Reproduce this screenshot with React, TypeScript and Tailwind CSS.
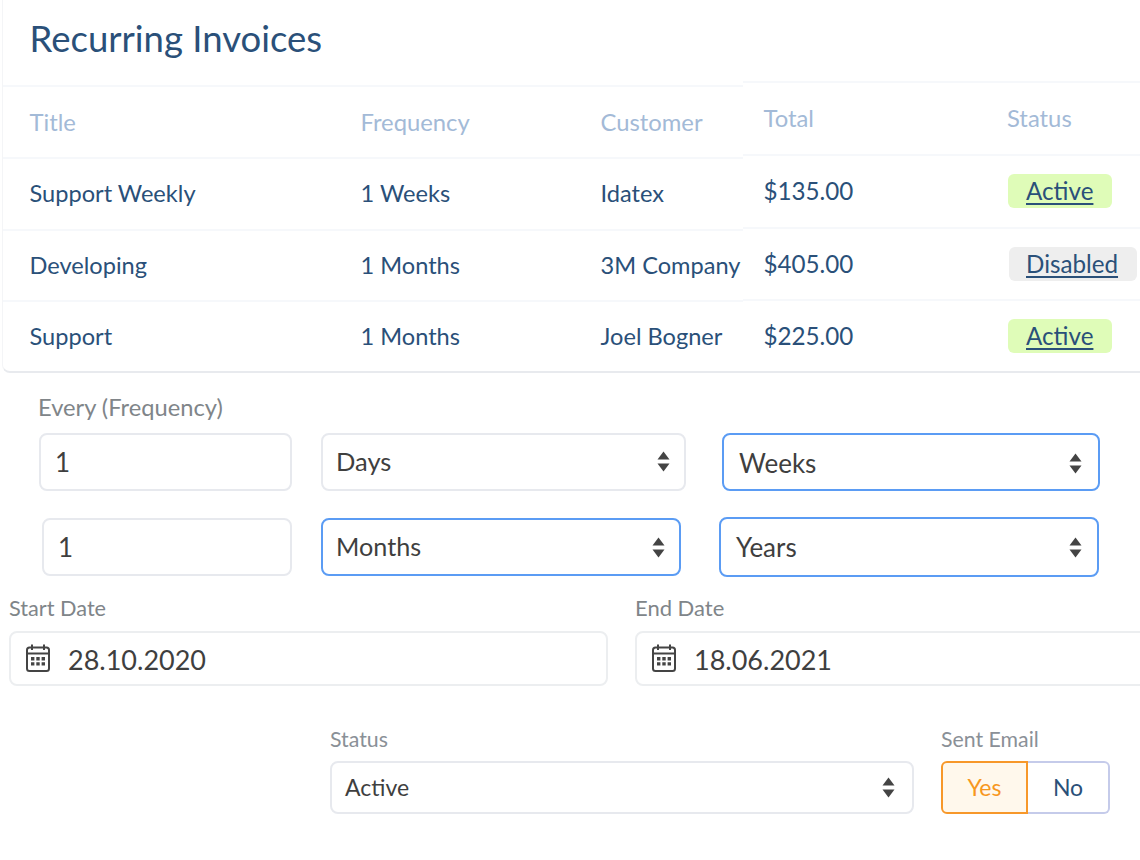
import React from "react";

const leftRows = [
  { title: "Support Weekly", frequency: "1 Weeks", customer: "Idatex" },
  { title: "Developing", frequency: "1 Months", customer: "3M Company" },
  { title: "Support", frequency: "1 Months", customer: "Joel Bogner" },
];

const rightRows = [
  { total: "$135.00", status: "Active" },
  { total: "$405.00", status: "Disabled" },
  { total: "$225.00", status: "Active" },
];

function Arrows() {
  return (
    <svg width="13" height="21" viewBox="0 0 13 21" className="shrink-0">
      <path d="M6.5 0.5 L12.5 8.5 H0.5 Z" fill="#444" />
      <path d="M6.5 20.5 L12.5 12.5 H0.5 Z" fill="#444" />
    </svg>
  );
}

function CalendarIcon() {
  return (
    <svg width="24" height="28" viewBox="0 0 24 28" className="mb-[2px] shrink-0" fill="none">
      <path d="M6 0.5V6M18 0.5V6" stroke="#444" strokeWidth="2" />
      <rect x="1" y="3.5" width="22" height="23.5" rx="2.5" stroke="#444" strokeWidth="2" />
      <path d="M1 9.5H23" stroke="#444" strokeWidth="2" />
      <path
        d="M5 13h3.4v3.4H5zM10.3 13h3.4v3.4h-3.4zM15.6 13H19v3.4h-3.4zM5 18.2h3.4v3.4H5zM10.3 18.2h3.4v3.4h-3.4zM15.6 18.2H19v3.4h-3.4z"
        fill="#444"
      />
    </svg>
  );
}

function Select({ label, focused, className }: { label: string; focused?: boolean; className: string }) {
  return (
    <div
      className={`flex items-center justify-between rounded-lg border-2 bg-white text-[#3f3f3f] ${
        focused ? "border-[#5b9cf4]" : "border-[#e7e9ee]"
      } ${className}`}
    >
      <span>{label}</span>
      <Arrows />
    </div>
  );
}

function Badge({ status }: { status: string }) {
  const active = status === "Active";
  return (
    <span
      className={`inline-block h-[34px] rounded-md text-[24.2px] leading-[34px] text-[#2a5079] underline underline-offset-[3px] ${
        active ? "w-[104px] bg-[#dffcb8] pl-[18px]" : "ml-[1px] w-[128px] bg-[#eeeeee] pl-[17px]"
      }`}
    >
      {status}
    </span>
  );
}

function DateField({ value, className }: { value: string; className: string }) {
  return (
    <div className={`flex h-[55px] shrink-0 items-center gap-[18px] rounded-lg border-2 border-[#eceef0] bg-white pl-[15px] text-[27px] text-[#3f3f3f] ${className}`}>
      <CalendarIcon />
      <span className="pt-[4px]">{value}</span>
    </div>
  );
}

export default function App() {
  return (
    <div className="h-[860px] w-[1140px] overflow-hidden bg-white font-['Lato',sans-serif]">
      {/* Tabla */}
      <div className="flex h-[373px] items-start">
        <div className="ml-[2px] h-[373px] w-[741px] rounded-bl-lg border-b-2 border-l border-b-[#e8eaee] border-l-[#f4f5f7]">
          <div className="flex h-[85px] items-center pb-[9px] pl-[26.5px] text-[36.5px] text-[#2a5079]">Recurring Invoices</div>
          <div className="flex h-[72px] items-center border-t-2 border-[#f6f8fb] pl-[26.5px] pt-[1px] text-[23.8px] text-[#a3bad7]">
            <span className="w-[331px]">Title</span>
            <span className="w-[240px]">Frequency</span>
            <span>Customer</span>
          </div>
          {leftRows.map((row) => (
            <div key={row.title} className="flex h-[71.5px] items-center border-t-2 border-[#f6f8fb] pl-[26.5px] text-[23.6px] text-[#2a5079]">
              <span className="w-[331px]">{row.title}</span>
              <span className="w-[240px]">{row.frequency}</span>
              <span className="whitespace-nowrap">{row.customer}</span>
            </div>
          ))}
        </div>
        <div className="h-[373px] flex-1 border-b-2 border-[#e8eaee] pt-[81px]">
          <div className="flex h-[73px] items-center border-t-2 border-[#f6f8fb] pl-[20.5px] text-[23.8px] text-[#a3bad7]">
            <span className="w-[243.5px]">Total</span>
            <span>Status</span>
          </div>
          {rightRows.map((row) => (
            <div key={row.total} className="flex h-[72.5px] items-center border-t-2 border-[#f6f8fb] pl-[20.5px] text-[24.2px] text-[#2a5079]">
              <span className="w-[244.5px]">{row.total}</span>
              <Badge status={row.status} />
            </div>
          ))}
        </div>
      </div>

      {/* Every (Frequency) */}
      <div className="ml-[38px] mt-[19px] text-[23.7px] leading-[30px] text-[#808589]">Every (Frequency)</div>
      <div className="ml-[39px] mt-[11px] flex h-[58px] items-stretch">
        <div className="flex w-[253px] items-center rounded-lg border-2 border-[#e7e9ee] pl-[14px] text-[26px] text-[#3f3f3f]">1</div>
        <Select label="Days" className="ml-[29px] w-[365px] pb-[2px] pl-[13px] pr-[14px] text-[25.5px]" />
        <Select label="Weeks" focused className="ml-[36px] w-[378px] pl-[15px] pr-[16px] pt-[2px] text-[26px]" />
      </div>
      <div className="ml-[42px] mt-[26px] flex h-[60px] items-center">
        <div className="flex h-[58px] w-[250px] items-center rounded-lg border-2 border-[#e7e9ee] pl-[14px] text-[26px] text-[#3f3f3f]">1</div>
        <Select label="Months" focused className="ml-[29px] h-[58px] w-[360px] pl-[13px] pr-[14px] text-[25.2px]" />
        <Select label="Years" focused className="ml-[38px] h-[60px] w-[380px] pl-[15px] pr-[15px] text-[26px]" />
      </div>

      {/* Fechas */}
      <div className="ml-[9px] mt-[16px] flex leading-[30px] text-[#808589]">
        <span className="w-[626px] text-[21.7px]">Start Date</span>
        <span className="text-[22px]">End Date</span>
      </div>
      <div className="ml-[9px] mt-[8px] flex">
        <DateField value="28.10.2020" className="w-[599px]" />
        <DateField value="18.06.2021" className="ml-[27px] w-[520px]" />
      </div>

      {/* Status */}
      <div className="ml-[330px] mt-[38px] flex text-[21.3px] leading-[30px] text-[#8a9097]">
        <span className="w-[611px]">Status</span>
        <span>Sent Email</span>
      </div>
      <div className="ml-[330px] mt-[7px] flex h-[53px]">
        <Select label="Active" className="w-[584px] border-[#e5eaf2] pl-[13px] pr-[17px] text-[23px]" />
        <div className="ml-[27px] flex w-[169px] text-[23px]">
          <div className="flex w-[87px] items-center justify-center rounded-l-md border-2 border-[#f7982a] bg-[#fff8ec] text-[#f7971e]">Yes</div>
          <div className="flex w-[82px] items-center justify-center rounded-r-md border-2 border-l-0 border-[#c5cbea] text-[#2a5079]">No</div>
        </div>
      </div>
    </div>
  );
}
